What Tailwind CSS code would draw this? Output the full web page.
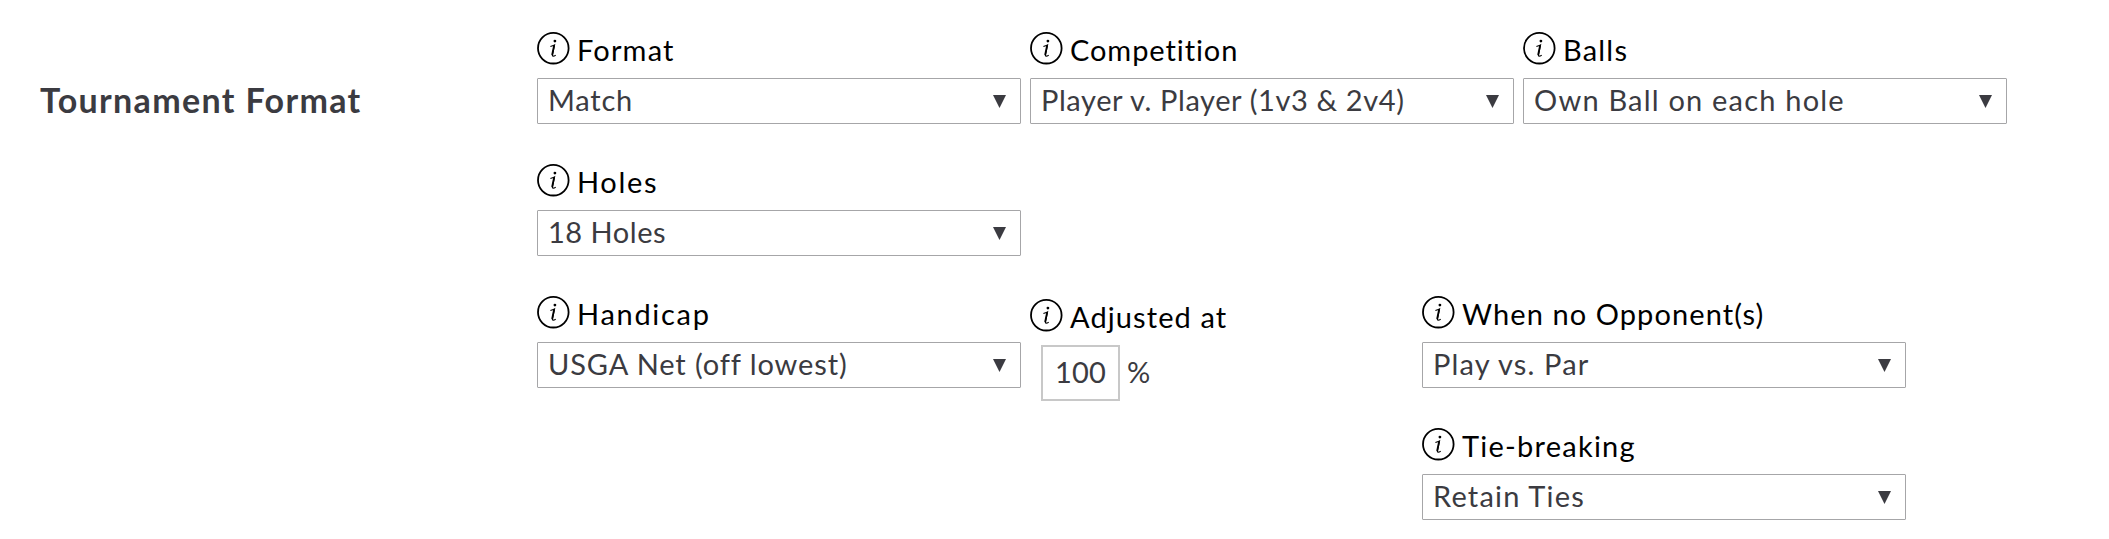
<!DOCTYPE html>
<html lang="en">
<head>
  <meta charset="UTF-8" />
  <meta name="viewport" content="width=device-width, initial-scale=1.0"/>
  <title>Tournament Format</title>
  <script src="https://cdn.jsdelivr.net/npm/@tailwindcss/browser@4"></script>
</head>
<body class="bg-white text-[#3b3b41] font-['Lato','Open_Sans',sans-serif] text-[29px]">
  <!-- Shared icons -->
  <svg class="hidden">
    <symbol id="info" viewBox="0 0 33 33">
      <circle cx="16.3" cy="16.2" r="15.3" fill="none" stroke="#000" stroke-width="1.8"/>
      <circle cx="17.9" cy="9.1" r="1.4"/>
      <path d="M13.4 14.5c1.6-.4 2.8-.8 4.1-1.5l-2 9.6c-.2 1.1 0 1.6.7 1.6s1.4-.3 2.5-1" fill="none" stroke="#000" stroke-width="1.2"/>
      <path d="M17.1 13.6l-2 9.4" fill="none" stroke="#000" stroke-width="1.8"/>
    </symbol>
    <symbol id="arrow" viewBox="0 0 13 13">
      <path d="M0 0h13L6.5 13z" fill="#3b3b41"/>
    </symbol>
  </svg>

  <div class="flex pt-8 pl-10">

    <!-- Section title -->
    <div class="w-[497px] pt-12">
      <h2 class="text-[34px] leading-10 font-bold tracking-[1.35px] whitespace-nowrap">Tournament Format</h2>
    </div>

    <!-- Fields -->
    <div class="flex flex-col gap-10">

      <div class="flex gap-[9px]">
        <div class="w-[484px]">
          <label class="flex h-[46px] gap-[7px] leading-9 text-black tracking-[1.16px]">
            <svg class="size-[33px]"><use href="#info"/></svg>Format
          </label>
          <div class="flex items-center justify-between h-[46px] border border-[#a6a6a8] rounded-[1px] pl-[10px] pr-[14px]">
            <span class="leading-9 pb-0.5 tracking-[0.78px]">Match</span>
            <svg class="size-[13px]"><use href="#arrow"/></svg>
          </div>
        </div>
        <div class="w-[484px]">
          <label class="flex h-[46px] gap-[7px] leading-9 text-black tracking-[0.92px]">
            <svg class="size-[33px]"><use href="#info"/></svg>Competition
          </label>
          <div class="flex items-center justify-between h-[46px] border border-[#a6a6a8] rounded-[1px] pl-[10px] pr-[14px]">
            <span class="leading-9 pb-0.5 tracking-[0.6px]">Player v. Player (1v3 &amp; 2v4)</span>
            <svg class="size-[13px]"><use href="#arrow"/></svg>
          </div>
        </div>
        <div class="w-[484px]">
          <label class="flex h-[46px] gap-[7px] leading-9 text-black tracking-[1.2px]">
            <svg class="size-[33px]"><use href="#info"/></svg>Balls
          </label>
          <div class="flex items-center justify-between h-[46px] border border-[#a6a6a8] rounded-[1px] pl-[10px] pr-[14px]">
            <span class="leading-9 pb-0.5 tracking-[1.2px]">Own Ball on each hole</span>
            <svg class="size-[13px]"><use href="#arrow"/></svg>
          </div>
        </div>
      </div>

      <div class="w-[484px]">
        <label class="flex h-[46px] gap-[7px] leading-9 text-black tracking-[1.68px]">
          <svg class="size-[33px]"><use href="#info"/></svg>Holes
        </label>
        <div class="flex items-center justify-between h-[46px] border border-[#a6a6a8] rounded-[1px] pl-[10px] pr-[14px]">
          <span class="leading-9 pb-0.5 tracking-[0.52px]">18 Holes</span>
          <svg class="size-[13px]"><use href="#arrow"/></svg>
        </div>
      </div>

      <div class="flex">
        <div class="w-[484px] mr-[9px]">
          <label class="flex h-[46px] gap-[7px] leading-9 text-black tracking-[1.7px]">
            <svg class="size-[33px]"><use href="#info"/></svg>Handicap
          </label>
          <div class="flex items-center justify-between h-[46px] border border-[#a6a6a8] rounded-[1px] pl-[10px] pr-[14px]">
            <span class="leading-9 pb-0.5 tracking-[0.9px]">USGA Net (off lowest)</span>
            <svg class="size-[13px]"><use href="#arrow"/></svg>
          </div>
        </div>
        <div class="w-[392px] pt-[3px]">
          <label class="flex h-[46px] gap-[7px] leading-9 text-black tracking-[1.1px]">
            <svg class="size-[33px]"><use href="#info"/></svg>Adjusted at
          </label>
          <div class="flex items-center pl-[11px]">
            <span class="flex items-center justify-center w-[79px] h-14 border-2 border-[#c8c8c8] tracking-[0.18px] leading-9 pb-0.5">100</span>
            <span class="ml-[7px] leading-9 pb-0.5">%</span>
          </div>
        </div>
        <div class="flex flex-col gap-10 w-[484px]">
          <div>
            <label class="flex h-[46px] gap-[7px] leading-9 text-black tracking-[1.09px]">
              <svg class="size-[33px]"><use href="#info"/></svg>When no Opponent(s)
            </label>
            <div class="flex items-center justify-between h-[46px] border border-[#a6a6a8] rounded-[1px] pl-[10px] pr-[14px]">
              <span class="leading-9 pb-0.5 tracking-[1.15px]">Play vs. Par</span>
              <svg class="size-[13px]"><use href="#arrow"/></svg>
            </div>
          </div>
          <div>
            <label class="flex h-[46px] gap-[7px] leading-9 text-black tracking-[1.24px]">
              <svg class="size-[33px]"><use href="#info"/></svg>Tie-breaking
            </label>
            <div class="flex items-center justify-between h-[46px] border border-[#a6a6a8] rounded-[1px] pl-[10px] pr-[14px]">
              <span class="leading-9 pb-0.5 tracking-[1.19px]">Retain Ties</span>
              <svg class="size-[13px]"><use href="#arrow"/></svg>
            </div>
          </div>
        </div>
      </div>

    </div>
  </div>
</body>
</html>
